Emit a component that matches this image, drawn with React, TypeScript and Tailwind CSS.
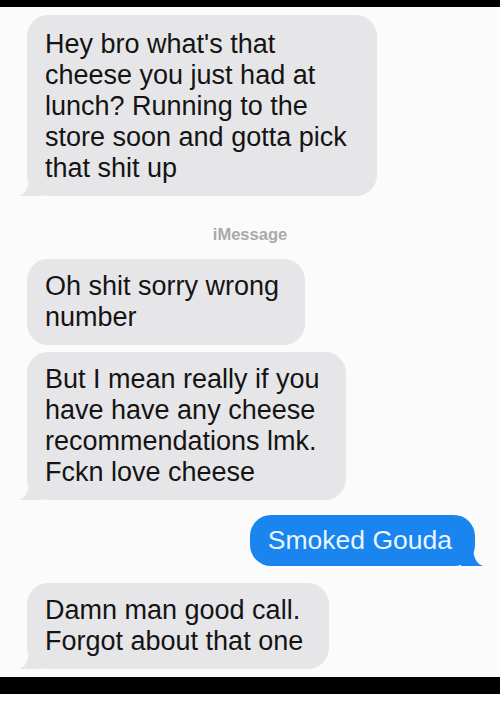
import React from "react";

const font = { fontFamily: '"Liberation Sans", Arial, Helvetica, sans-serif' };

function TailLeft({ color }: { color: string }) {
  return (
    <svg
      className="absolute bottom-0 left-[-8px]"
      width="22"
      height="22"
      viewBox="0 0 22 22"
    >
      <path d="M22 0 L22 22 L0 22 C6 20 10 14 10 2 Z" fill={color} />
    </svg>
  );
}

function TailRight({ color }: { color: string }) {
  return (
    <svg
      className="absolute bottom-0 right-[-8px]"
      width="22"
      height="22"
      viewBox="0 0 22 22"
    >
      <path d="M0 0 L0 22 L22 22 C16 20 12 14 12 2 Z" fill={color} />
    </svg>
  );
}

function Gray({
  lines,
  tail,
  className,
  pad,
}: {
  lines: string[];
  tail?: boolean;
  className?: string;
  pad?: string;
}) {
  return (
    <div className={"relative self-start ml-[27px] " + (className ?? "")}>
      {tail && <TailLeft color="#e6e6e9" />}
      <div
        className={
          "relative rounded-[21px] bg-[#e6e6e9] pl-[18px] pr-[26px] text-[27px] leading-[31px] text-[#141414] whitespace-nowrap " +
          (pad ?? "py-[12px]")
        }
      >
        {lines.map((l, i) => (
          <div key={i}>{l}</div>
        ))}
      </div>
    </div>
  );
}

export default function App() {
  return (
    <div className="w-[500px] h-[716px] bg-white flex flex-col" style={font}>
      <div className="h-[7px] bg-black shrink-0" />
      <div className="flex-1 bg-[#fbfbfb] flex flex-col pt-[8px]">
        <Gray
          tail
          pad="pt-[14px] pb-[12px]"
          lines={[
            "Hey bro what's that",
            "cheese you just had at",
            "lunch? Running to the",
            "store soon and gotta pick",
            "that shit up",
          ]}
          className="w-[350px]"
        />
        <div className="text-center text-[16.5px] font-bold text-[#a9a9ab] mt-[28px] leading-[20px]">
          iMessage
        </div>
        <Gray lines={["Oh shit sorry wrong", "number"]} className="mt-[15px]" />
        <Gray
          tail
          lines={[
            "But I mean really if you",
            "have have any cheese",
            "recommendations lmk.",
            "Fckn love cheese",
          ]}
          className="mt-[7px]"
        />
        <div className="relative self-end mr-[25px] mt-[15px]">
          <TailRight color="#1a85ef" />
          <div className="relative rounded-[21px] bg-[#1a85ef] pl-[18px] pr-[23px] py-[10px] text-[26.5px] leading-[31px] text-[#e8f4ff] whitespace-nowrap">
            Smoked Gouda
          </div>
        </div>
        <Gray
          tail
          lines={["Damn man good call.", "Forgot about that one"]}
          className="mt-[17px]"
        />
      </div>
      <div className="h-[17px] bg-black shrink-0" />
      <div className="h-[22px] bg-white shrink-0" />
    </div>
  );
}
